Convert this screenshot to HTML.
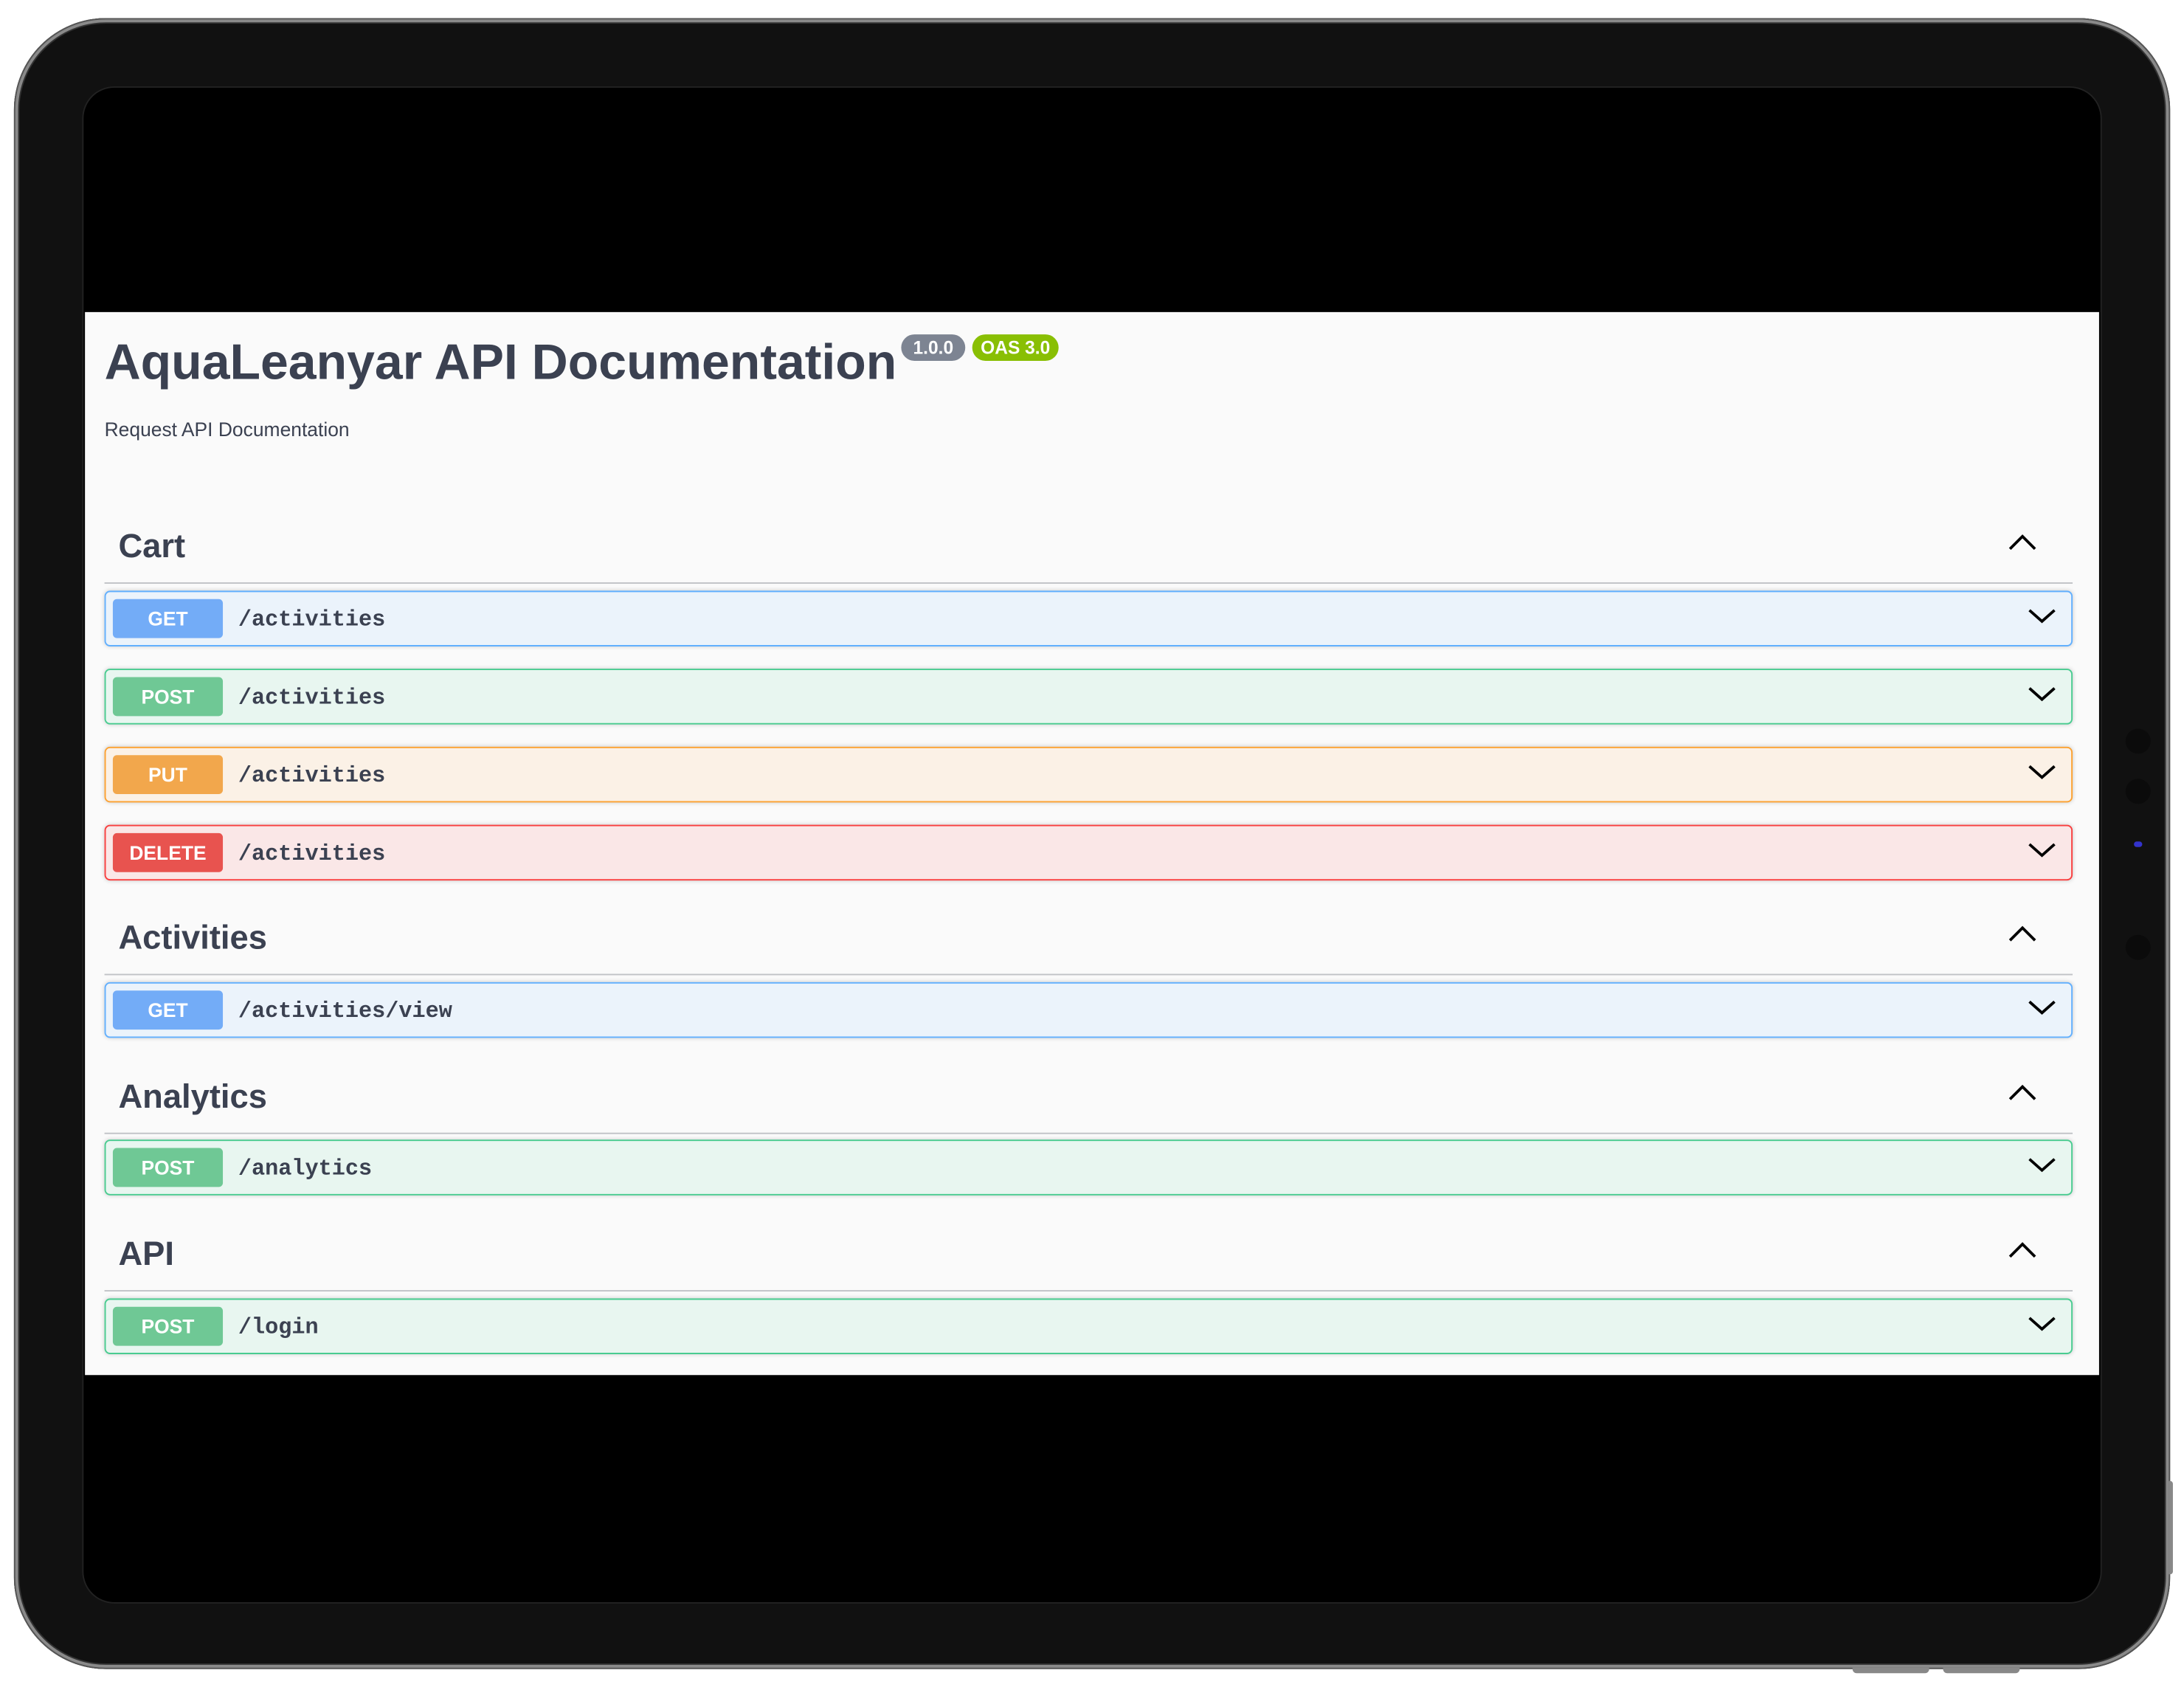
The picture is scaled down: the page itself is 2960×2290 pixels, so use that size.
<!DOCTYPE html>
<html><head><meta charset="utf-8"><style>
html,body{margin:0;padding:0;background:#fff;width:2960px;height:2290px;overflow:hidden}
#w{position:absolute;left:0;top:0;width:1568px;height:1213px;transform:scale(1.8878);transform-origin:0 0;font-family:"Liberation Sans",sans-serif}
.dev{position:absolute;left:10px;top:13px;width:1548px;height:1185px;border-radius:66px;background:#111;box-shadow:inset 0 0 0 1px #555,inset 0 0 0 3px #8a8a8a,inset 0 0 0 4px #333}
.scr{position:absolute;left:60px;top:63px;width:1448px;height:1087px;border-radius:22px;background:#000;box-shadow:0 0 0 1px #222;overflow:hidden}
.cont{position:absolute;left:1px;top:161px;width:1446px;height:763px;background:#fafafa;color:#3b4151}
h1{position:absolute;left:14px;top:15px;margin:0;font-size:36px;font-weight:bold;white-space:nowrap}
.b{position:absolute;top:16px;height:19px;border-radius:10px;color:#fff;font-size:13px;font-weight:bold;line-height:19px;text-align:center}
.desc{position:absolute;left:14px;top:76px;font-size:14px}
.sec{position:absolute;left:14px;width:1413px}
.sec h3{position:absolute;left:10px;margin:0;font-size:24px;font-weight:bold;top:-13px}
.sec .ln{position:absolute;left:0;width:1413px;height:1px;background:rgba(59,65,81,.3);top:26px}
.op{position:absolute;left:14px;width:1411px;height:38px;border:1px solid;border-radius:4px;box-shadow:0 0 3px rgba(0,0,0,.19)}
.m{position:absolute;left:5px;top:5px;width:79px;height:28px;border-radius:3px;color:#fff;font-weight:bold;font-size:14px;line-height:28px;text-align:center}
.p{position:absolute;left:95px;top:11px;font-family:"Liberation Mono",monospace;font-weight:bold;font-size:16px;color:#3b4151}
svg{position:absolute}
.dot{position:absolute;left:1526px;width:18px;height:18px;border-radius:50%;background:#0b0b0b}
</style></head><body><div id="w">
<div class="dev"></div>
<div style="position:absolute;left:1330px;top:1197px;width:55px;height:4px;border-radius:0 0 3px 3px;background:#888"></div>
<div style="position:absolute;left:1395px;top:1197px;width:55px;height:4px;border-radius:0 0 3px 3px;background:#888"></div>
<div style="position:absolute;left:1557px;top:1063px;width:3px;height:67px;border-radius:0 2px 2px 0;background:#888"></div>
<div class="dot" style="top:523px"></div><div class="dot" style="top:559px"></div><div class="dot" style="top:671px"></div>
<div style="position:absolute;left:1532px;top:604px;width:6px;height:4px;border-radius:2px;background:#33c"></div>
<div class="scr"><div class="cont">
<h1>AquaLeanyar API Documentation</h1>
<div class="b" style="left:586px;width:46px;background:#7d8492">1.0.0</div>
<div class="b" style="left:637px;width:62px;background:#89bf04">OAS 3.0</div>
<div class="desc">Request API Documentation</div>

<div class="sec" style="top:168px"><h3>Cart</h3><div class="ln"></div></div>
<svg style="left:1381px;top:158px" width="20" height="14"><path d="M1 12 L10 3 L19 12" stroke="#000" stroke-width="2" fill="none"/></svg>
<div class="op" style="top:200px;border-color:#61affe;background:#ebf3fb"><div class="m" style="background:#73acf7">GET</div><div class="p">/activities</div></div>
<div class="op" style="top:256px;border-color:#49cc90;background:#e8f6f0"><div class="m" style="background:#6fc895">POST</div><div class="p">/activities</div></div>
<div class="op" style="top:312px;border-color:#fca130;background:#fbf1e6"><div class="m" style="background:#f2a74c">PUT</div><div class="p">/activities</div></div>
<div class="op" style="top:368px;border-color:#f93e3e;background:#fae7e7"><div class="m" style="background:#e8534f">DELETE</div><div class="p">/activities</div></div>

<div class="sec" style="top:449px"><h3>Activities</h3><div class="ln"></div></div>
<svg style="left:1381px;top:439px" width="20" height="14"><path d="M1 12 L10 3 L19 12" stroke="#000" stroke-width="2" fill="none"/></svg>
<div class="op" style="top:481px;border-color:#61affe;background:#ebf3fb"><div class="m" style="background:#73acf7">GET</div><div class="p">/activities/view</div></div>

<div class="sec" style="top:563px"><h3>Analytics</h3><div class="ln"></div></div>
<svg style="left:1381px;top:553px" width="20" height="14"><path d="M1 12 L10 3 L19 12" stroke="#000" stroke-width="2" fill="none"/></svg>
<div class="op" style="top:594px;border-color:#49cc90;background:#e8f6f0"><div class="m" style="background:#6fc895">POST</div><div class="p">/analytics</div></div>

<div class="sec" style="top:676px"><h3>API</h3><div class="ln"></div></div>
<svg style="left:1381px;top:666px" width="20" height="14"><path d="M1 12 L10 3 L19 12" stroke="#000" stroke-width="2" fill="none"/></svg>
<div class="op" style="top:708px;border-color:#49cc90;background:#e8f6f0"><div class="m" style="background:#6fc895">POST</div><div class="p">/login</div></div>
</div>
<svg style="left:1396px;top:374px" width="20" height="440"><g stroke="#000" stroke-width="2" fill="none">
<path d="M1 1 L10 9 L19 1"/><path d="M1 57 L10 65 L19 57"/><path d="M1 113 L10 121 L19 113"/><path d="M1 169 L10 177 L19 169"/>
<path d="M1 282 L10 290 L19 282"/><path d="M1 395 L10 403 L19 395"/></g></svg>
<svg style="left:1396px;top:882px" width="20" height="12"><path d="M1 1 L10 9 L19 1" stroke="#000" stroke-width="2" fill="none"/></svg>
</div>
</div></body></html>
